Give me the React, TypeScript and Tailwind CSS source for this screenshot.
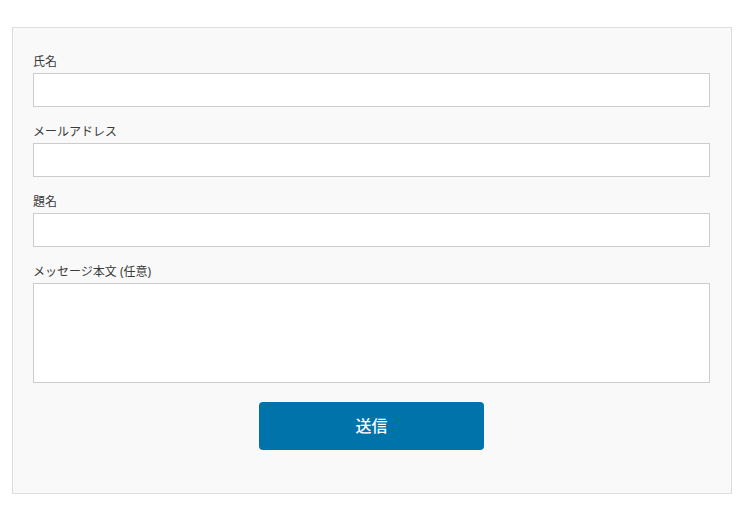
import React from 'react'

const font = { fontFamily: '"Noto Sans", "Noto Sans CJK JP", sans-serif' }

function Field({ label, area }: { label: string; area?: boolean }) {
    return (
        <div className="flex flex-col">
            <label className="text-xs leading-[18px] text-[#3a3a3a] pt-px mb-[2px]">{label}</label>
            {area ? (
                <textarea className="h-[100px] w-full border border-[#ccc] bg-white resize-none outline-none" />
            ) : (
                <input type="text" className="h-[34px] w-full border border-[#ccc] bg-white outline-none" />
            )}
        </div>
    )
}

export default function App() {
    return (
        <div className="min-h-[520px] bg-white pt-[27px] px-3" style={font}>
            <form className="w-[720px] border border-[#ddd] bg-[#f9f9f9] pl-5 pr-[21px] pt-6 pb-[43px]">
                <div className="flex flex-col gap-[15px]">
                    <Field label="氏名" />
                    <Field label="メールアドレス" />
                    <Field label="題名" />
                    <Field label="メッセージ本文 (任意)" area />
                </div>
                <div className="flex justify-center mt-[19px]">
                    <button type="button" className="w-[225px] h-12 rounded bg-[#0073aa] text-white text-base font-medium">
                        送信
                    </button>
                </div>
            </form>
        </div>
    )
}
